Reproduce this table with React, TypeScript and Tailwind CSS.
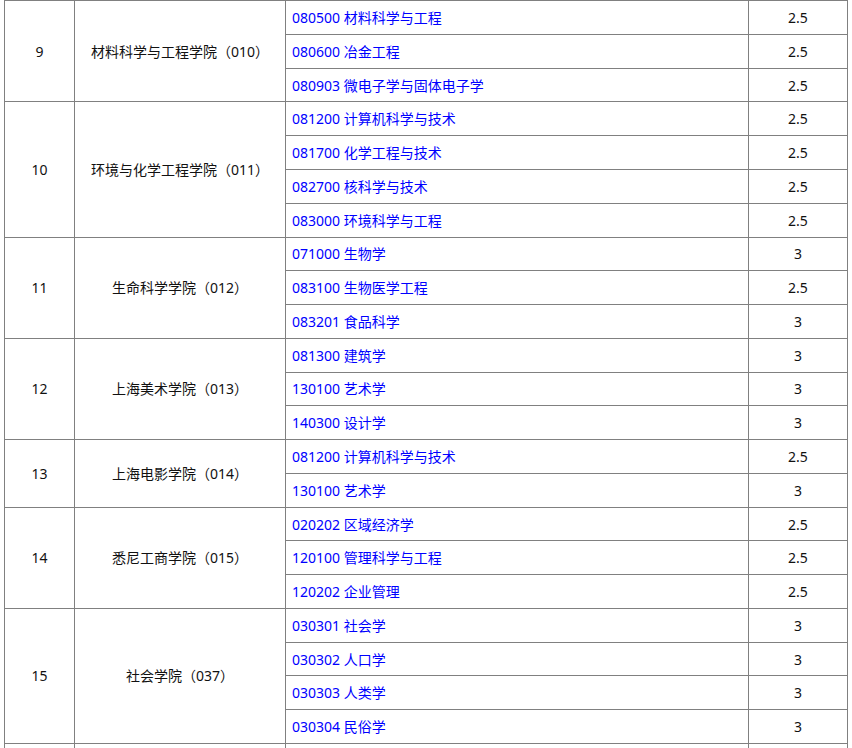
import React from 'react';

type Group = {
  no: string;
  school: string;
  majors: [string, string][];
};

const groups: Group[] = [
  { no: '', school: '', majors: [['', '']] },
  {
    no: '9',
    school: '材料科学与工程学院（010）',
    majors: [
      ['080500 材料科学与工程', '2.5'],
      ['080600 冶金工程', '2.5'],
      ['080903 微电子学与固体电子学', '2.5'],
    ],
  },
  {
    no: '10',
    school: '环境与化学工程学院（011）',
    majors: [
      ['081200 计算机科学与技术', '2.5'],
      ['081700 化学工程与技术', '2.5'],
      ['082700 核科学与技术', '2.5'],
      ['083000 环境科学与工程', '2.5'],
    ],
  },
  {
    no: '11',
    school: '生命科学学院（012）',
    majors: [
      ['071000 生物学', '3'],
      ['083100 生物医学工程', '2.5'],
      ['083201 食品科学', '3'],
    ],
  },
  {
    no: '12',
    school: '上海美术学院（013）',
    majors: [
      ['081300 建筑学', '3'],
      ['130100 艺术学', '3'],
      ['140300 设计学', '3'],
    ],
  },
  {
    no: '13',
    school: '上海电影学院（014）',
    majors: [
      ['081200 计算机科学与技术', '2.5'],
      ['130100 艺术学', '3'],
    ],
  },
  {
    no: '14',
    school: '悉尼工商学院（015）',
    majors: [
      ['020202 区域经济学', '2.5'],
      ['120100 管理科学与工程', '2.5'],
      ['120202 企业管理', '2.5'],
    ],
  },
  {
    no: '15',
    school: '社会学院（037）',
    majors: [
      ['030301 社会学', '3'],
      ['030302 人口学', '3'],
      ['030303 人类学', '3'],
      ['030304 民俗学', '3'],
    ],
  },
  { no: '', school: '', majors: [['', '']] },
];

export default function App() {
  return (
    <div className="w-[852px] h-[748px] overflow-hidden bg-white">
      <table
        className="mx-auto -mt-[33.6px] w-[843px] table-fixed border-collapse text-[14px] text-[#111]"
        style={{ fontFamily: '"Noto Sans", "Noto Sans CJK SC", sans-serif' }}
      >
        <colgroup>
          <col className="w-[70px]" />
          <col className="w-[211px]" />
          <col className="w-[463px]" />
          <col className="w-[99px]" />
        </colgroup>
        <tbody>
          {groups.map((g, gi) =>
            g.majors.map(([major, score], i) => (
              <tr key={gi + '-' + i} className="h-[33.77px]">
                {i === 0 && (
                  <>
                    <td rowSpan={g.majors.length} className="border border-[#808080] p-0 text-center align-middle">
                      {g.no}
                    </td>
                    <td rowSpan={g.majors.length} className="border border-[#808080] p-0 text-center align-middle">
                      {g.school}
                    </td>
                  </>
                )}
                <td className="border border-[#808080] py-0 pl-[6px] align-middle text-[#0000ff]">{major}</td>
                <td className="border border-[#808080] p-0 text-center align-middle">{score}</td>
              </tr>
            ))
          )}
        </tbody>
      </table>
    </div>
  );
}
